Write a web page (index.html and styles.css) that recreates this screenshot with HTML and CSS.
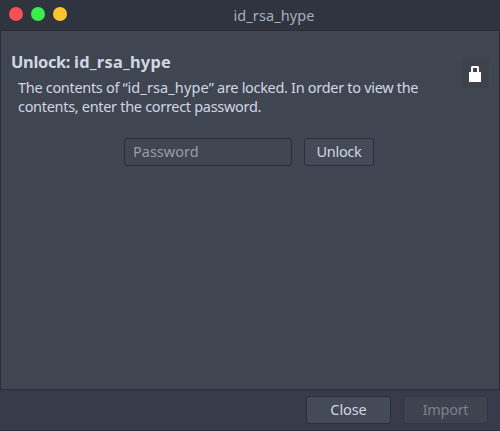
FILE: index.html
```html
<!DOCTYPE html>
<html lang="en">
<head>
<meta charset="utf-8">
<title>id_rsa_hype</title>
<link rel="stylesheet" href="styles.css">
</head>
<body>
<div class="window">
  <header class="titlebar">
    <div class="controls"><span class="dot close"></span><span class="dot maximize"></span><span class="dot minimize"></span></div>
    <div class="title"><span>id_rsa_hype</span></div>
  </header>
  <main class="content">
    <div class="info">
      <div class="message">
        <h1>Unlock: <span class="name">id_rsa_hype</span></h1>
        <p>The contents of “<span class="file">id_rsa_hype</span>” are locked. In order to view the<br>contents, enter the correct password.</p>
      </div>
      <div class="lock">
        <svg width="28" height="28" viewBox="0 0 28 28"><path fill="#fff" fill-rule="evenodd" d="M8 12h2V7l1-1h6l1 1v5h2v10H8zM12 12h4V8h-4z"/></svg>
      </div>
    </div>
    <form class="unlock">
      <input type="password" placeholder="Password">
      <button type="button">Unlock</button>
    </form>
  </main>
  <footer class="actions">
    <button type="button">Close</button>
    <button type="button" disabled>Import</button>
  </footer>
</div>
</body>
</html>
```
FILE: styles.css
```css
* { box-sizing: border-box; }
body {
  margin: 0;
  font-family: "Noto Sans", sans-serif;
  font-size: 14.5px;
  color: #d0d7e3;
}
.window {
  width: 500px;
  height: 431px;
  display: flex;
  flex-direction: column;
  background: #383c4a;
  border-bottom: 1px solid #2b2e39;
}
.titlebar {
  height: 31px;
  display: grid;
  grid-template-columns: 67px 1fr 19px;
  align-items: center;
  background: #2f343f;
  border-bottom: 1px solid #292d37;
}
.controls { display: flex; gap: 8px; padding: 0 0 2px 9px; }
.dot { width: 14px; height: 14px; border-radius: 50%; }
.close { background: #f94f57; }
.maximize { background: #38ee48; }
.minimize { background: #fec530; }
.title {
  display: flex;
  justify-content: center;
  color: #a6afbe;
  line-height: 20px;
  padding-bottom: 1px;
  letter-spacing: 0.1px;
}
.content {
  height: 359px;
  background: #404552;
  border: 1px solid #2b2e39;
  border-top: 0;
  padding: 20px 10px 0;
}
.info { display: flex; justify-content: space-between; height: 87px; }
h1 { margin: 0; font-size: 16.4px; line-height: 22px; font-weight: 700; letter-spacing: -0.32px; }
.name { letter-spacing: 0.25px; }
p { margin: 5px 0 0 7px; line-height: 19px; white-space: nowrap; letter-spacing: -0.31px; }
.file { letter-spacing: 0.11px; }
.lock { width: 28px; height: 28px; margin-top: 9px; background: #3d424b; }
svg { display: block; }
.unlock { display: flex; gap: 12px; margin: 0 0 0 113px; }
input, button {
  height: 28px;
  margin: 0;
  font: inherit;
  line-height: 20px;
  color: #d0d7e3;
  background: #444a58;
  border: 1px solid #2b2e39;
  border-radius: 3px;
  padding: 0 0 2px;
}
input { width: 168px; padding: 0 8px 2px; background: #404552; }
input::placeholder { color: #999da4; opacity: 1; }
.unlock button { width: 70px; letter-spacing: -0.3px; }
.actions { display: flex; gap: 12px; padding: 6px 12px 0; justify-content: flex-end; }
.actions button { width: 85px; }
.actions button:disabled { color: #7b808b; background: #3e4350; border-color: #323641; letter-spacing: -0.3px; }
.actions button:first-child { letter-spacing: -0.1px; }
```
